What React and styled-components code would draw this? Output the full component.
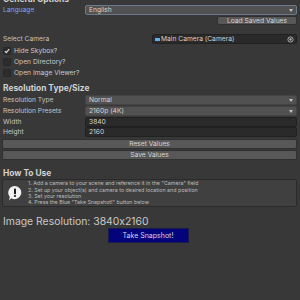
import React from "react";
import styled, { createGlobalStyle } from "styled-components";

const Global = createGlobalStyle`
  html, body { margin: 0; padding: 0; background: #383838; }
  body {
    font-family: Inter, "Liberation Sans", Arial, sans-serif;
    font-feature-settings: "calt" 0;
  }
`;

const Page = styled.div`
  width: 300px;
  height: 300px;
  overflow: hidden;
  background: #383838;
  color: #c8c8c8;
  padding: 0 3px 0 2px;
  box-sizing: border-box;
  display: flex;
  flex-direction: column;
  font-size: 6.7px;
`;

const Header = styled.div`
  font-weight: 700;
  font-size: 8.4px;
  line-height: 12px;
  height: 12px;
  color: #d2d2d2;
  padding-left: 1px;
  margin-top: ${(p) => p.$mt || 0}px;
`;

const Row = styled.div`
  display: flex;
  align-items: center;
  height: ${(p) => p.$h || 10}px;
  margin-top: ${(p) => p.$mt || 0}px;
  justify-content: ${(p) => (p.$end ? "flex-end" : "flex-start")};
`;

const Label = styled.div`
  width: ${(p) => p.$w || 82}px;
  flex-shrink: 0;
  padding-left: 1px;
  color: ${(p) => (p.$active ? "#7ea6ea" : "#c4c4c4")};
  white-space: nowrap;
`;

const Dropdown = styled.div`
  flex: 1;
  height: 100%;
  box-sizing: border-box;
  background: #515151;
  border: 1px solid ${(p) => (p.$focus ? "#6a7a8c" : "#444")};
  border-radius: 2px;
  display: flex;
  align-items: center;
  padding: 0 3px;
  color: #d6d6d6;
  justify-content: space-between;
`;

const Arrow = styled.span`
  width: 0;
  height: 0;
  border-left: 2.5px solid transparent;
  border-right: 2.5px solid transparent;
  border-top: 3px solid #c4c4c4;
`;

const TextField = styled.div`
  flex: 1;
  height: 100%;
  box-sizing: border-box;
  background: #2a2a2a;
  border: 1px solid #212121;
  border-radius: 2px;
  display: flex;
  align-items: center;
  padding: 0 3px;
  color: #d2d2d2;
`;

const ObjectField = styled(TextField)`
  padding: 0 2px;
  justify-content: space-between;
`;

const CamIcon = styled.span`
  display: inline-block;
  width: 5px;
  height: 3px;
  background: #5fb4f0;
  margin-right: 1px;
  border-radius: 0.5px;
`;

const Button = styled.div`
  width: ${(p) => (p.$w ? p.$w + "px" : "auto")};
  flex: ${(p) => (p.$w ? "none" : 1)};
  height: 100%;
  box-sizing: border-box;
  background: #585858;
  border: 1px solid #303030;
  border-radius: 2px;
  display: flex;
  align-items: center;
  justify-content: center;
  color: #d4d4d4;
`;

const Check = styled.div`
  width: 8px;
  height: 8px;
  box-sizing: border-box;
  background: #2d2d2d;
  border: 1px solid #262626;
  border-radius: 1.5px;
  margin: 0 3px 0 1px;
  display: flex;
  align-items: center;
  justify-content: center;
`;

const Spacer = styled.div`
  height: ${(p) => p.$h}px;
  flex-shrink: 0;
`;

const HelpBox = styled.div`
  height: 28px;
  box-sizing: border-box;
  background: #404040;
  border: 1px solid #2b2b2b;
  border-radius: 2px;
  display: flex;
  align-items: center;
  padding: 0 0 0 3px;
`;

const HelpIcon = styled.div`
  width: 18px;
  display: flex;
  justify-content: center;
  margin-right: 4px;
`;

const HelpLines = styled.div`
  font-size: 5.3px;
  line-height: 6.3px;
  color: #bdbdbd;
`;

const BigText = styled.div`
  font-size: 10.4px;
  line-height: 12px;
  color: #c8c8c8;
  margin-top: 9px;
  padding-left: 1px;
`;

const SnapRow = styled.div`
  display: flex;
  justify-content: center;
`;

const SnapButton = styled.div`
  width: 81px;
  height: 15px;
  box-sizing: border-box;
  background: #03037c;
  border: 1px solid #1c1c4a;
  display: flex;
  align-items: center;
  justify-content: center;
  color: #d4d4ee;
  font-size: 7px;
  margin-right: 3px;
`;

const CheckMark = () => (
  <svg width="6" height="6" viewBox="0 0 6 6">
    <path d="M0.8 3.2 L2.3 4.7 L5.2 1.2" stroke="#e0e0e0" strokeWidth="1.1" fill="none" />
  </svg>
);

const Target = () => (
  <svg width="7" height="7" viewBox="0 0 8 8">
    <circle cx="4" cy="4" r="3" stroke="#b8b8b8" strokeWidth="1" fill="none" />
    <circle cx="4" cy="4" r="1.3" fill="#b8b8b8" />
  </svg>
);

const InfoBubble = () => (
  <svg width="16" height="17" viewBox="0 0 16 17">
    <path d="M8 1 A6.6 6.6 0 1 1 4.2 13.2 L2 15.5 L2.8 11.8 A6.6 6.6 0 0 1 8 1 Z" fill="#f2f2f2" />
    <rect x="7" y="3.6" width="2" height="5.6" rx="0.8" fill="#1a1a1a" />
    <circle cx="8" cy="11" r="1.1" fill="#1a1a1a" />
  </svg>
);

export default function App() {
  return (
    <>
      <Global />
      <Page>
        <Header $mt={-7}>General Options</Header>
        <Row $h={10}>
          <Label $active>Language</Label>
          <Dropdown $focus>
            <span>English</span>
            <Arrow />
          </Dropdown>
        </Row>
        <Row $h={9} $mt={1} $end>
          <Button $w={80}>Load Saved Values</Button>
        </Row>
        <Spacer $h={9} />
        <Row $h={10}>
          <Label $w={149}>Select Camera</Label>
          <ObjectField>
            <span>
              <CamIcon />
              Main Camera (Camera)
            </span>
            <Target />
          </ObjectField>
        </Row>
        <Row $h={9} $mt={2}>
          <Check>
            <CheckMark />
          </Check>
          <span>Hide Skybox?</span>
        </Row>
        <Row $h={9} $mt={2}>
          <Check />
          <span>Open Directory?</span>
        </Row>
        <Row $h={9} $mt={2}>
          <Check />
          <span>Open Image Viewer?</span>
        </Row>
        <Header $mt={5}>Resolution Type/Size</Header>
        <Row $h={10} $mt={1}>
          <Label>Resolution Type</Label>
          <Dropdown>
            <span>Normal</span>
            <Arrow />
          </Dropdown>
        </Row>
        <Row $h={10} $mt={1}>
          <Label>Resolution Presets</Label>
          <Dropdown>
            <span>2160p (4K)</span>
            <Arrow />
          </Dropdown>
        </Row>
        <Row $h={10} $mt={1}>
          <Label>Width</Label>
          <TextField>3840</TextField>
        </Row>
        <Row $h={10} $mt={0}>
          <Label>Height</Label>
          <TextField>2160</TextField>
        </Row>
        <Row $h={10} $mt={2}>
          <Button>Reset Values</Button>
        </Row>
        <Row $h={10} $mt={1}>
          <Button>Save Values</Button>
        </Row>
        <Header $mt={7}>How To Use</Header>
        <HelpBox>
          <HelpIcon>
            <InfoBubble />
          </HelpIcon>
          <HelpLines>
            <div>1. Add a camera to your scene and reference it in the "Camera" field</div>
            <div>2. Set up your object(s) and camera to desired location and position</div>
            <div>3. Set your resolution</div>
            <div>4. Press the Blue "Take Snapshot!" button below</div>
          </HelpLines>
        </HelpBox>
        <BigText>Image Resolution: 3840x2160</BigText>
        <SnapRow>
          <SnapButton>Take Snapshot!</SnapButton>
        </SnapRow>
      </Page>
    </>
  );
}
